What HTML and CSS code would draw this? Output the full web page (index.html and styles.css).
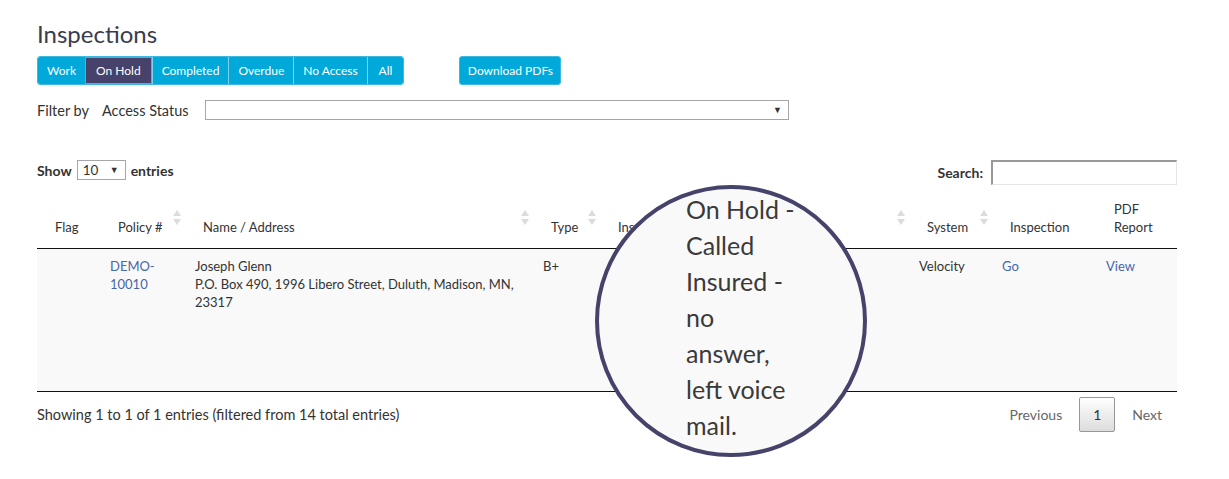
FILE: index.html
```html
<!DOCTYPE html>
<html>
<head>
<meta charset="utf-8">
<link rel="stylesheet" href="styles.css">
</head>
<body>
<div class="page">
  <h1 class="title">Inspections</h1>
  <div class="toolbar">
    <div class="btn-group">
      <span class="btn">Work</span>
      <span class="btn active">On Hold</span>
      <span class="btn">Completed</span>
      <span class="btn">Overdue</span>
      <span class="btn">No Access</span>
      <span class="btn">All</span>
    </div>
    <span class="btn single">Download PDFs</span>
  </div>
  <div class="filter-row">
    <span class="filter-label">Filter by</span>
    <span class="filter-name">Access Status</span>
    <div class="select wide"><span class="arrow">▼</span></div>
  </div>
  <div class="table-controls">
    <div class="length">Show <div class="select small"><span class="val">10</span><span class="arrow">▼</span></div> entries</div>
    <div class="search">Search: <div class="search-input"></div></div>
  </div>
  <table class="grid">
    <colgroup>
      <col style="width:63px"><col style="width:85px"><col style="width:348px"><col style="width:67px"><col style="width:160px"><col style="width:149px"><col style="width:83px"><col style="width:104px"><col style="width:81px">
    </colgroup>
    <thead>
      <tr>
        <th>Flag</th>
        <th class="sort">Policy #</th>
        <th class="sort">Name / Address</th>
        <th class="sort">Type</th>
        <th class="sort">Inspector</th>
        <th class="sort">Status</th>
        <th class="sort">System</th>
        <th>Inspection</th>
        <th>PDF<br>Report</th>
      </tr>
    </thead>
    <tbody>
      <tr>
        <td></td>
        <td><a class="link">DEMO-<br>10010</a></td>
        <td class="nowrap">Joseph Glenn<br>P.O. Box 490, 1996 Libero Street, Duluth, Madison, MN,<br>23317</td>
        <td>B+</td>
        <td></td>
        <td>On Hold -<br>Called<br>Insured -<br>no<br>answer,<br>left voice<br>mail.</td>
        <td>Velocity</td>
        <td><a class="link">Go</a></td>
        <td><a class="link">View</a></td>
      </tr>
    </tbody>
  </table>
  <div class="table-footer">
    <div class="info">Showing 1 to 1 of 1 entries (filtered from 14 total entries)</div>
    <div class="paging">
      <span class="page-link">Previous</span>
      <span class="page-btn">1</span>
      <span class="page-link">Next</span>
    </div>
  </div>
  <div class="magnifier">
    <div class="mag-text">On Hold -<br>Called<br>Insured -<br>no<br>answer,<br>left voice<br>mail.</div>
  </div>
</div>
</body>
</html>
```
FILE: styles.css
```css
* { box-sizing: border-box; }
html, body { min-height: 479px; }
body {
  margin: 0;
  background: #fff;
  font-family: "Lato", "Open Sans", sans-serif;
  font-size: 13px;
  color: #333;
}
.page {
  position: relative;
  width: 1140px;
  margin-left: 37px;
  padding-top: 18px;
  padding-bottom: 60px;
}
.title {
  margin: 0;
  font-weight: 400;
  font-size: 24px;
  line-height: 32px;
  color: #3b3b4e;
}
.toolbar {
  display: flex;
  gap: 55px;
  margin-top: 6px;
  height: 29px;
}
.btn-group {
  display: flex;
  border-radius: 3px;
  overflow: hidden;
  border: 1px solid #3cb9e0;
}
.btn {
  display: flex;
  align-items: center;
  padding: 0 9px;
  background: #00a9d9;
  color: #fff;
  font-size: 12px;
  border-left: 1px solid #7fd1ec;
}
.btn-group .btn:first-child { border-left: none; }
.btn.active {
  background: #46426b;
  border: 1px solid #6f9fe0;
  padding: 0 10px;
}
.btn-group .btn:last-child { padding: 0 11px; }
.btn.single {
  border: 1px solid #3cb9e0;
  border-radius: 3px;
  width: 102px;
  justify-content: center;
  padding: 0;
}
.filter-row {
  display: flex;
  align-items: center;
  margin-top: 15px;
  height: 20px;
  font-size: 14.5px;
}
.filter-label { width: 65px; }
.filter-name { width: 103px; }
.select {
  position: relative;
  border: 1px solid #a6a6a6;
  background: #fff;
  height: 20px;
}
.select.wide { width: 584px; }
.select .arrow {
  position: absolute;
  right: 6px;
  top: 3px;
  font-size: 9px;
  line-height: 12px;
  color: #333;
}
.table-controls {
  display: flex;
  justify-content: space-between;
  align-items: flex-start;
  margin-top: 40px;
  font-weight: 700;
  font-size: 14px;
}
.length {
  display: flex;
  align-items: center;
  gap: 5px;
  height: 20px;
}
.select.small {
  width: 49px;
  display: inline-block;
}
.select.small .val {
  position: absolute;
  left: 5px;
  top: 0;
  font-weight: 400;
  font-size: 13.5px;
  line-height: 18px;
}
.search {
  display: flex;
  align-items: center;
  gap: 8px;
  height: 25px;
}
.search-input {
  width: 186px;
  height: 25px;
  border-top: 2px solid #999;
  border-left: 2px solid #999;
  border-right: 1px solid #e6e6e6;
  border-bottom: 1px solid #e6e6e6;
}
.grid {
  width: 1140px;
  table-layout: fixed;
  border-collapse: collapse;
  margin-top: 7px;
}
.grid th {
  position: relative;
  text-align: left;
  vertical-align: bottom;
  font-weight: 400;
  padding: 8px 18px 12px;
  line-height: 18px;
  border-bottom: 1px solid #111;
}
.grid th.sort::before,
.grid th.sort::after {
  content: "";
  position: absolute;
  right: 4px;
  border-left: 4px solid transparent;
  border-right: 4px solid transparent;
}
.grid th.sort::before {
  top: 18px;
  border-bottom: 6px solid #dcdcdc;
}
.grid th.sort::after {
  top: 27px;
  border-top: 6px solid #dcdcdc;
}
.grid td {
  vertical-align: top;
  padding: 8px 10px;
  line-height: 18px;
  background: #f9f9f9;
  border-bottom: 1px solid #111;
}
.grid td.nowrap { white-space: nowrap; }
.link { color: #4766aa; }
.table-footer {
  display: flex;
  justify-content: space-between;
  align-items: center;
  margin-top: 5px;
}
.info { font-size: 14.5px; }
.paging {
  display: flex;
  align-items: center;
  color: #666;
  font-size: 14px;
}
.page-link { padding: 0 17px; }
.page-btn {
  display: flex;
  align-items: center;
  justify-content: center;
  width: 36px;
  height: 35px;
  border: 1px solid #979797;
  border-radius: 2px;
  background: linear-gradient(#fff, #dcdcdc);
  color: #333;
}
.paging .page-link:last-child { padding-right: 15px; }
.magnifier {
  position: absolute;
  left: 558px;
  top: 185px;
  width: 272px;
  height: 272px;
  border: 4px solid #46436b;
  border-radius: 50%;
  background: #f9f9f9;
  overflow: hidden;
}
.mag-text {
  position: absolute;
  left: 87px;
  top: 2px;
  font-size: 25px;
  line-height: 36px;
  color: #3a3a3a;
  white-space: nowrap;
}
```
